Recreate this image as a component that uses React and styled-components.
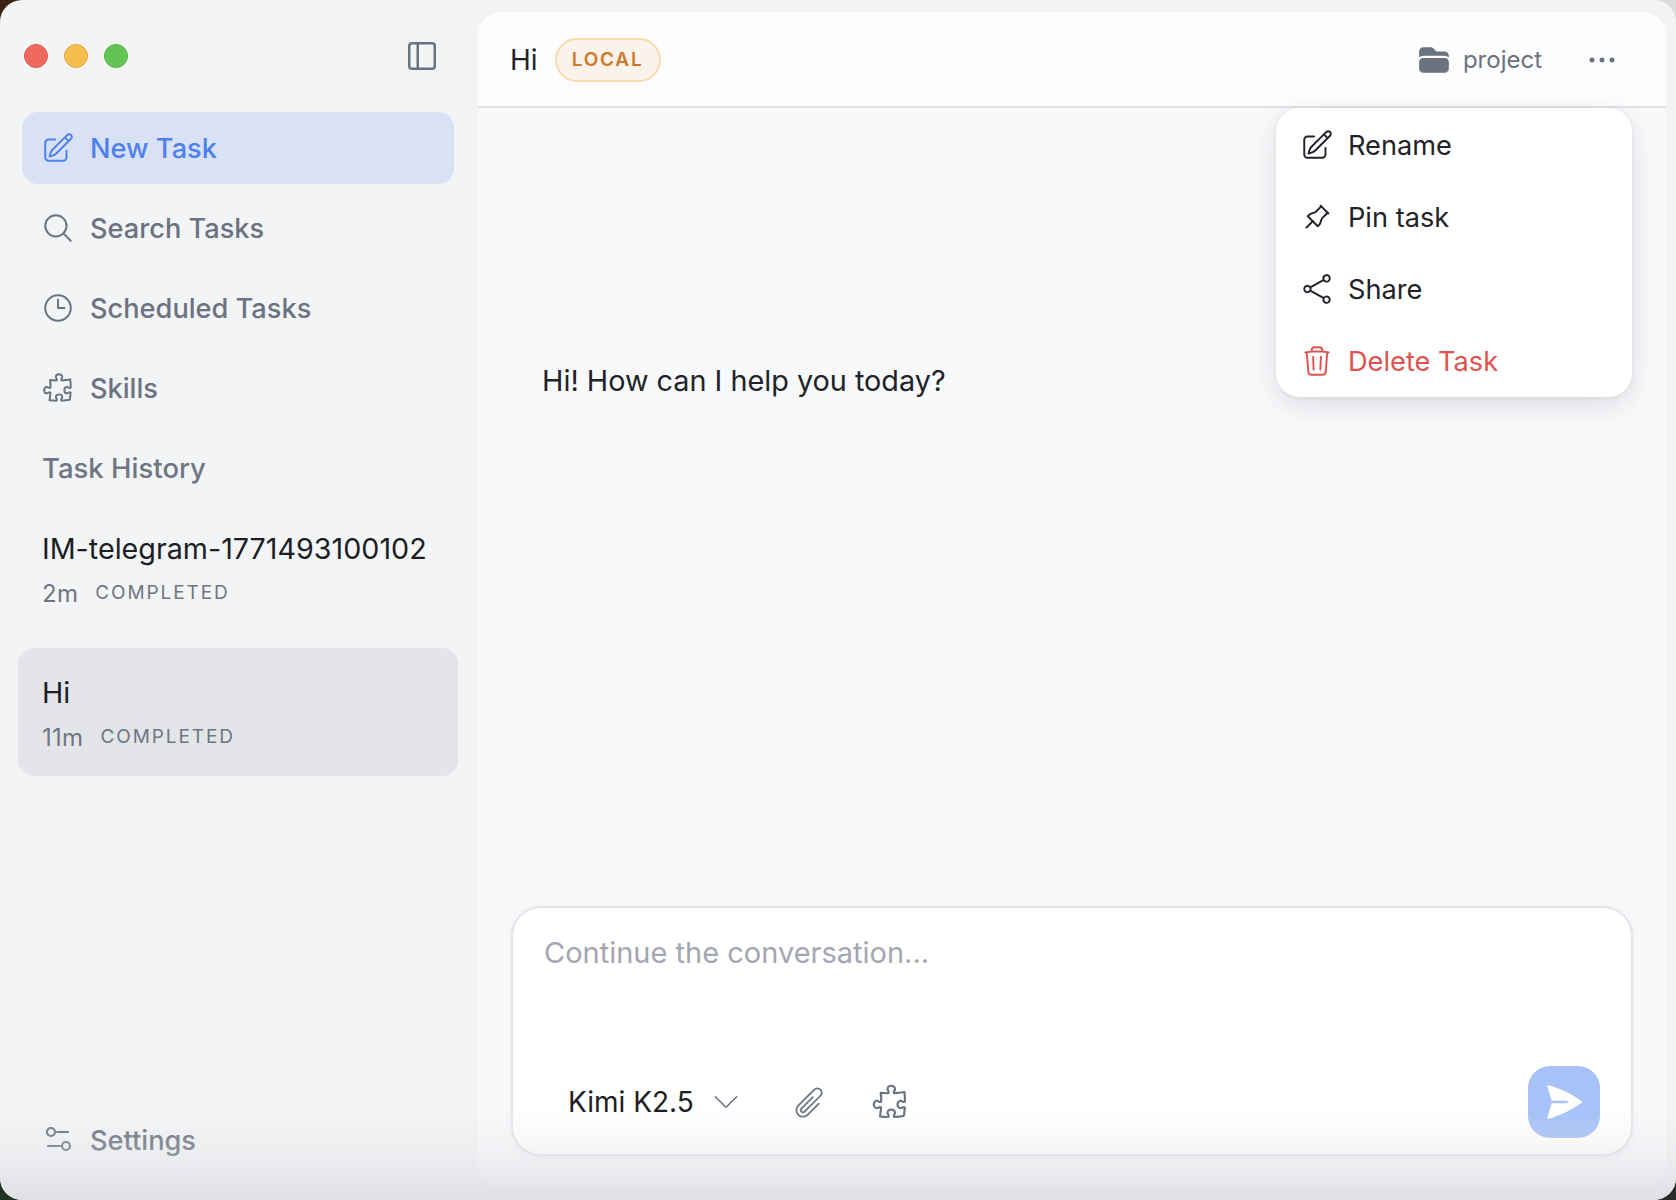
import React from 'react';
import styled, { createGlobalStyle } from 'styled-components';
import { PanelLeft } from 'lucide-react';
import {
  HiOutlinePencilSquare, HiOutlineMagnifyingGlass, HiOutlineClock, HiOutlinePuzzlePiece,
  HiOutlineShare, HiOutlineTrash, HiOutlinePaperClip, HiFolder, HiOutlineChevronDown,
  HiEllipsisHorizontal, HiPaperAirplane,
} from 'react-icons/hi2';
import { TbPin } from 'react-icons/tb';

const Global = createGlobalStyle`
  html, body { margin: 0; padding: 0; background: #2a2a2a; }
  * { box-sizing: border-box; }
  body { font-family: Inter, "Liberation Sans", sans-serif; }
`;
const Desktop = styled.div`
  width: 1676px; height: 1200px;
  background: conic-gradient(#dcdcdc 0 90deg, #2a2a2a 90deg 180deg, #1f3320 180deg 270deg, #3a2312 270deg);
`;
const Window = styled.div`
  position: relative; width: 1676px; height: 1200px; overflow: hidden;
  border-radius: 22px; background: #f3f4f6;
  display: grid; grid-template-columns: 478px 1fr;
`;
const BottomShade = styled.div`
  position: absolute; left: 0; right: 0; bottom: 0; height: 90px; pointer-events: none;
  background: linear-gradient(to bottom, rgba(222,223,226,0) 0%, rgba(222,223,226,.35) 55%, rgba(222,223,226,.95) 100%);
`;
const Sidebar = styled.aside`
  display: flex; flex-direction: column; padding: 0 0 24px;
`;
const TitleBar = styled.div`
  height: 112px; flex: none; padding: 0 39px 0 24px; display: flex; align-items: flex-start;
  justify-content: space-between;
`;
const Lights = styled.div` display: flex; gap: 16px; padding-top: 44px; `;
const Light = styled.span`
  width: 24px; height: 24px; border-radius: 50%;
  background: ${p => p.$c}; border: 1px solid ${p => p.$b};
`;
const ToggleBtn = styled.div` color: #6b7280; display: flex; padding-top: 39px; `;
const Nav = styled.nav` display: flex; flex-direction: column; gap: 8px; padding: 0 24px 0 22px; `;
const NavItem = styled.div`
  height: 72px; display: flex; align-items: center; gap: 15px; padding-left: 19px;
  border-radius: 16px; font-size: 27.2px; font-weight: 500;
  color: ${p => (p.$active ? '#4f80f0' : '#6b7280')};
  background: ${p => (p.$active ? '#d9e2f5' : 'transparent')};
  svg { flex: none; width: 34px; height: 34px; stroke-width: 1.4; }
`;
const SectionTitle = styled.div`
  height: 72px; display: flex; align-items: center; padding-left: 20px;
  font-size: 27.5px; font-weight: 500; color: #6f7683;
`;
const History = styled.div` display: flex; flex-direction: column; gap: 16px; padding: 0 20px 0 18px; `;
const HistoryItem = styled.div`
  height: 128px; padding: 27px 24px 0; border-radius: 16px;
  background: ${p => (p.$active ? '#e4e5e8' : 'transparent')};
`;
const HistoryName = styled.div` font-size: 28.7px; line-height: 36px; color: #1b1e24; `;
const HistoryMeta = styled.div` display: flex; align-items: center; gap: 17px; margin-top: 7px; line-height: 36px; `;
const Age = styled.span` font-size: 24px; letter-spacing: .3px; color: #6f7683; padding-top: 2px; `;
const Status = styled.span` font-size: 19px; letter-spacing: 1.9px; color: #6f7683; `;
const Spacer = styled.div` flex: 1; `;
const Main = styled.main`
  position: relative; margin: 12px 10px 10px 0; border-radius: 24px; background: #f8f9fb;
  display: flex; flex-direction: column;
`;
const Header = styled.header`
  height: 96px; flex: none; display: flex; align-items: center; padding: 1px 44px 0 32px;
  background: #fdfdfe; border-bottom: 2px solid #e1e3e8; border-radius: 24px 24px 0 0;
`;
const HeaderTitle = styled.div` font-size: 28px; color: #1f2329; `;
const Badge = styled.span`
  margin-left: 17px; height: 44px; width: 106px; display: flex; align-items: center; justify-content: center;
  border: 2px solid #f7d9ae; background: #fbf3ea; border-radius: 22px;
  font-size: 19px; font-weight: 600; letter-spacing: 1.8px; color: #cb7a2c;
`;
const Project = styled.div`
  margin-left: auto; display: flex; align-items: center; gap: 12px; font-size: 24px; color: #6b7280;
  svg { width: 34px; height: 34px; }
`;
const MoreBtn = styled.div`
  margin-left: 40px; display: flex; color: #6b7280;
  svg { width: 40px; height: 40px; }
`;
const Messages = styled.div`
  flex: 1; padding: 255px 64px 0; font-size: 28.8px; color: #1f2329; line-height: 36px;
`;
const Composer = styled.div`
  margin: 0 33px 34px; height: 250px; flex: none; background: #fff;
  border: 2px solid #e3e5ea; border-radius: 30px; display: flex; flex-direction: column;
  padding: 27px 31px 16px 31px; box-shadow: 0 2px 8px rgba(0,0,0,.05);
`;
const Placeholder = styled.div` flex: 1; font-size: 29px; line-height: 36px; color: #a2a7b1; `;
const ToolRow = styled.div` display: flex; align-items: center; height: 72px; padding-left: 24px; `;
const Model = styled.span` font-size: 28px; color: #1b1e24; `;
const Tool = styled.span`
  display: flex; color: ${p => p.$c || '#6b7280'}; margin-left: ${p => p.$m}px;
  svg { width: ${p => p.$s}px; height: ${p => p.$s}px; stroke-width: ${p => p.$w}; }
`;
const SendBtn = styled.div`
  margin-left: auto; width: 72px; height: 72px; border-radius: 22px; background: #a6c2f8;
  display: flex; align-items: center; justify-content: center; color: #fff;
  svg { width: 42px; height: 42px; }
`;
const Menu = styled.div`
  position: absolute; top: 96px; right: 34px; width: 356px; height: 289px; background: #fff;
  border-radius: 24px; box-shadow: 0 8px 26px rgba(30,35,50,.13), 0 1px 4px rgba(30,35,50,.06);
  padding: 1px 0 0; display: flex; flex-direction: column;
`;
const MenuItem = styled.div`
  height: 72px; flex: none; display: flex; align-items: center; gap: 14px; padding-left: 24px;
  font-size: 27.2px; color: ${p => (p.$danger ? '#e0524f' : '#1f2329')};
  svg { width: 34px; height: 34px; flex: none; stroke-width: 1.35; }
`;
const SliderIcon = () => (
  <svg viewBox="0 0 34 34" fill="none" stroke="currentColor" style={{ strokeWidth: 2.2 }} strokeLinecap="round">
    <circle cx="10" cy="9" r="4" />
    <path d="M16 9h11" />
    <circle cx="25" cy="23" r="4" />
    <path d="M7 23h12" />
  </svg>
);

export default function App() {
  return (
    <Desktop>
      <Global />
      <Window>
        <Sidebar>
          <TitleBar>
            <Lights>
              <Light $c="#ee6a5f" $b="#dd5a50" />
              <Light $c="#f6be4f" $b="#e4a93f" />
              <Light $c="#61c454" $b="#55b249" />
            </Lights>
            <ToggleBtn><PanelLeft size={34} strokeWidth={1.75} /></ToggleBtn>
          </TitleBar>
          <Nav>
            <NavItem $active><HiOutlinePencilSquare />New Task</NavItem>
            <NavItem><HiOutlineMagnifyingGlass />Search Tasks</NavItem>
            <NavItem><HiOutlineClock />Scheduled Tasks</NavItem>
            <NavItem><HiOutlinePuzzlePiece />Skills</NavItem>
            <SectionTitle>Task History</SectionTitle>
          </Nav>
          <History>
            <HistoryItem>
              <HistoryName>IM-telegram-1771493100102</HistoryName>
              <HistoryMeta><Age>2m</Age><Status>COMPLETED</Status></HistoryMeta>
            </HistoryItem>
            <HistoryItem $active>
              <HistoryName>Hi</HistoryName>
              <HistoryMeta><Age>11m</Age><Status>COMPLETED</Status></HistoryMeta>
            </HistoryItem>
          </History>
          <Spacer />
          <Nav>
            <NavItem><SliderIcon />Settings</NavItem>
          </Nav>
        </Sidebar>
        <Main>
          <Header>
            <HeaderTitle>Hi</HeaderTitle>
            <Badge>LOCAL</Badge>
            <Project><HiFolder />project</Project>
            <MoreBtn><HiEllipsisHorizontal /></MoreBtn>
          </Header>
          <Messages>Hi! How can I help you today?</Messages>
          <Composer>
            <Placeholder>Continue the conversation...</Placeholder>
            <ToolRow>
              <Model>Kimi K2.5</Model>
              <Tool $m={15} $s={34} $w={1.1}><HiOutlineChevronDown /></Tool>
              <Tool $m={49} $s={35} $w={1.2}><HiOutlinePaperClip /></Tool>
              <Tool $m={43} $s={40} $w={1.3}><HiOutlinePuzzlePiece /></Tool>
              <SendBtn><HiPaperAirplane /></SendBtn>
            </ToolRow>
          </Composer>
          <Menu>
            <MenuItem><HiOutlinePencilSquare />Rename</MenuItem>
            <MenuItem><TbPin />Pin task</MenuItem>
            <MenuItem><HiOutlineShare />Share</MenuItem>
            <MenuItem $danger><HiOutlineTrash />Delete Task</MenuItem>
          </Menu>
        </Main>
        <BottomShade />
      </Window>
    </Desktop>
  );
}
